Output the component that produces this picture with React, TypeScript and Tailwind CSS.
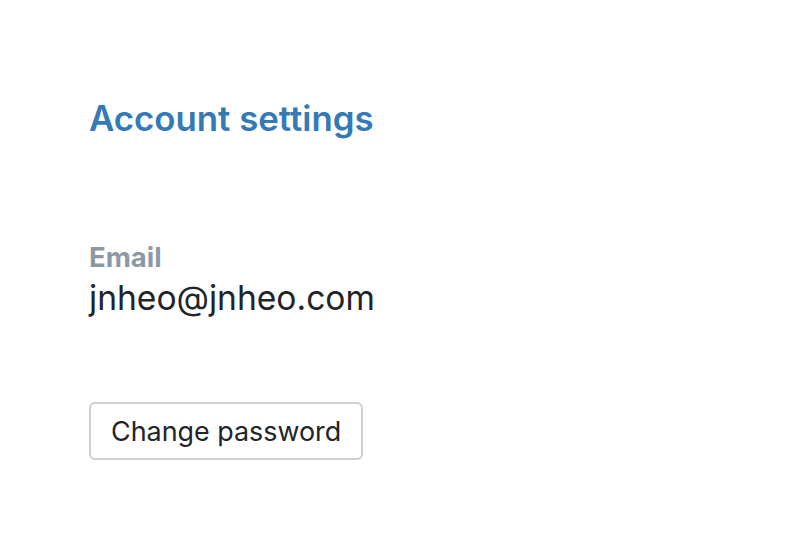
import React from 'react'

const App: React.FC = () => {
  return (
    <div className="min-h-[536px] bg-white px-[89px] pt-[96px] font-['Inter',sans-serif] text-[#212529]">
      <h1 className="text-[34.8px] font-semibold leading-[44px] text-[#337ab7]">Account settings</h1>

      <div className="mt-[99px]">
        <div className="text-[27.5px] font-bold leading-[36px] text-[#8c99a5]">Email</div>
        <div className="text-[33.6px] leading-[46px]">jnheo@jnheo.com</div>
      </div>

      <button className="mt-[81px] h-[58px] rounded-[6px] border-2 border-[#cfcfcf] bg-white px-[20px] text-[26.9px] leading-none text-[#212529]">
        Change password
      </button>
    </div>
  )
}

export default App
